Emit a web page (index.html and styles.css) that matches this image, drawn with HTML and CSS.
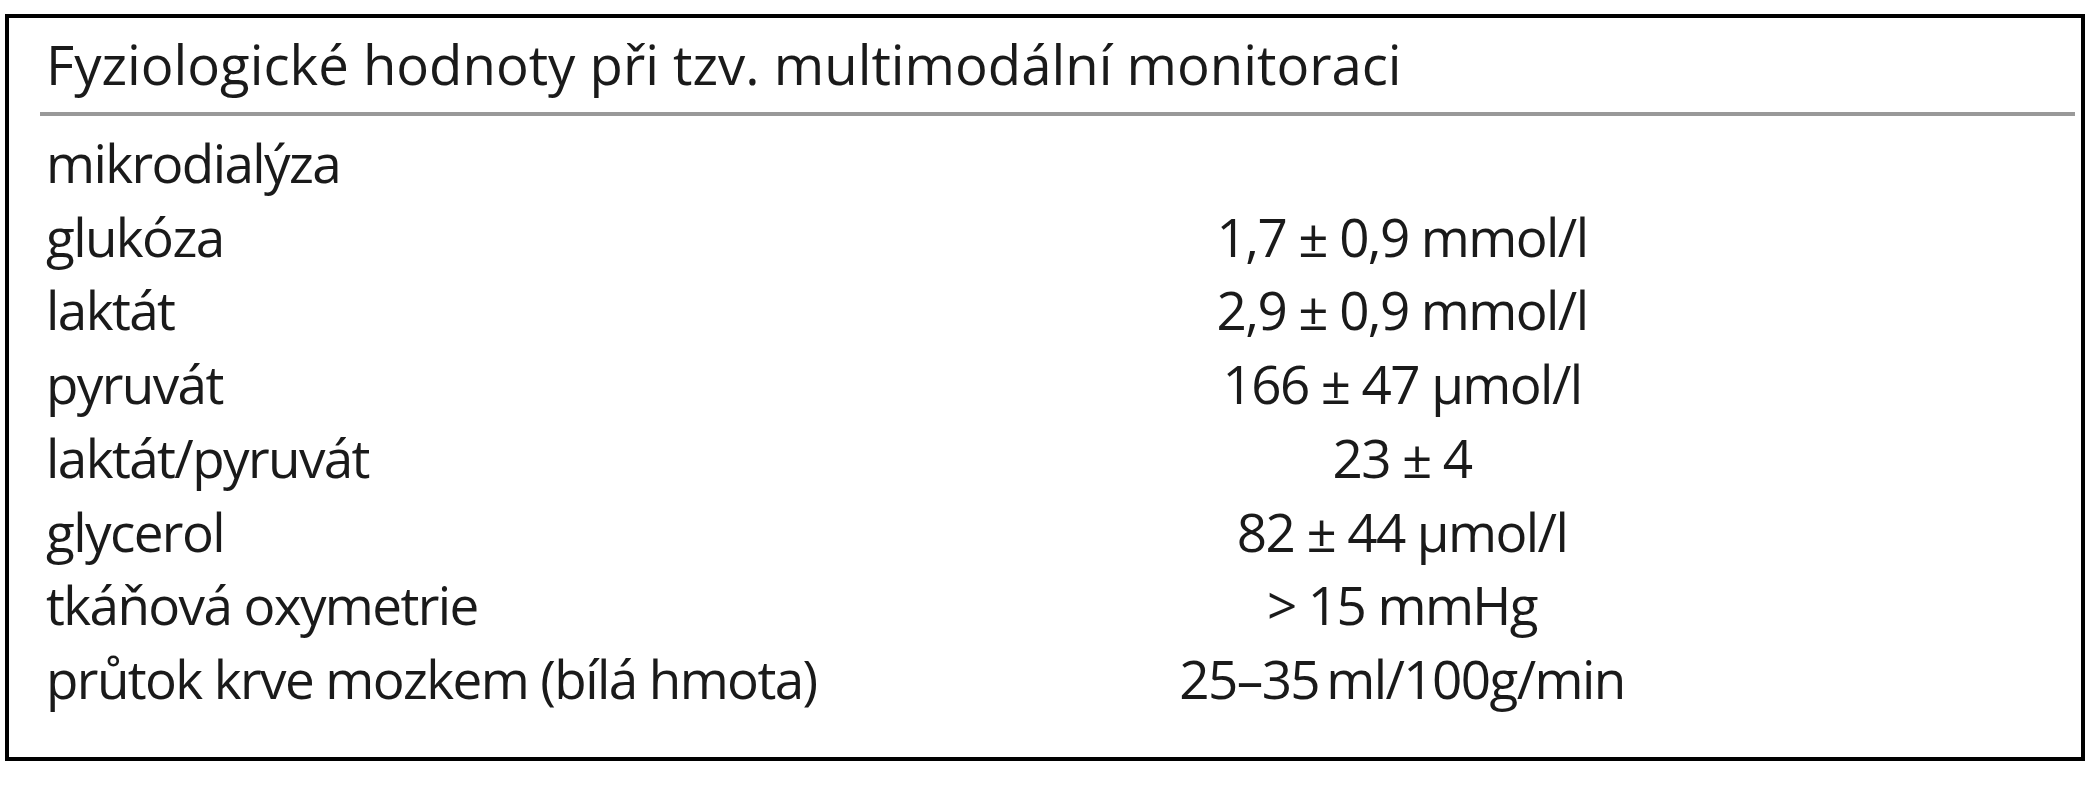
FILE: index.html
```html
<!DOCTYPE html>
<html lang="cs">
<head>
<meta charset="utf-8">
<title>Fyziologické hodnoty</title>
<link rel="stylesheet" href="styles.css">
</head>
<body>
<div class="box">
  <div class="title">Fyziologické hodnoty při tzv. multimodální monitoraci</div>
  <div class="rows">
    <div class="row"><span class="label">mikrodialýza</span><span class="value"></span></div>
    <div class="row"><span class="label">glukóza</span><span class="value">1,7 ± 0,9 mmol/l</span></div>
    <div class="row"><span class="label">laktát</span><span class="value">2,9 ± 0,9 mmol/l</span></div>
    <div class="row"><span class="label">pyruvát</span><span class="value">166 ± 47 µmol/l</span></div>
    <div class="row"><span class="label">laktát/pyruvát</span><span class="value">23 ± 4</span></div>
    <div class="row"><span class="label">glycerol</span><span class="value">82 ± 44 µmol/l</span></div>
    <div class="row"><span class="label">tkáňová oxymetrie</span><span class="value">&gt; 15 mmHg</span></div>
    <div class="row"><span class="label">průtok krve mozkem (bílá hmota)</span><span class="value">25–35&#8201;ml/100g/min</span></div>
  </div>
</div>
</body>
</html>
```
FILE: styles.css
```css
html, body {
  margin: 0;
  padding: 0;
  background: #ffffff;
}
body {
  font-family: "Open Sans", "Noto Sans", sans-serif;
  font-size: 53px;
  color: #1a1a1a;
}
.box {
  box-sizing: border-box;
  margin: 14px 0 0 5px;
  width: 2080px;
  height: 747px;
  border: 4px solid #000000;
  padding: 9px 6px 0 31px;
}
.title {
  font-size: 54.5px;
  line-height: 74px;
  padding: 0 0 11px 6px;
  border-bottom: 4px solid #999999;
}
.rows {
  padding-top: 10px;
}
.row {
  display: grid;
  grid-template-columns: 689px 1fr;
  line-height: 73.7px;
  letter-spacing: -1.6px;
}
.label {
  padding-left: 6px;
  white-space: nowrap;
}
.value {
  text-align: center;
  white-space: nowrap;
}
```
